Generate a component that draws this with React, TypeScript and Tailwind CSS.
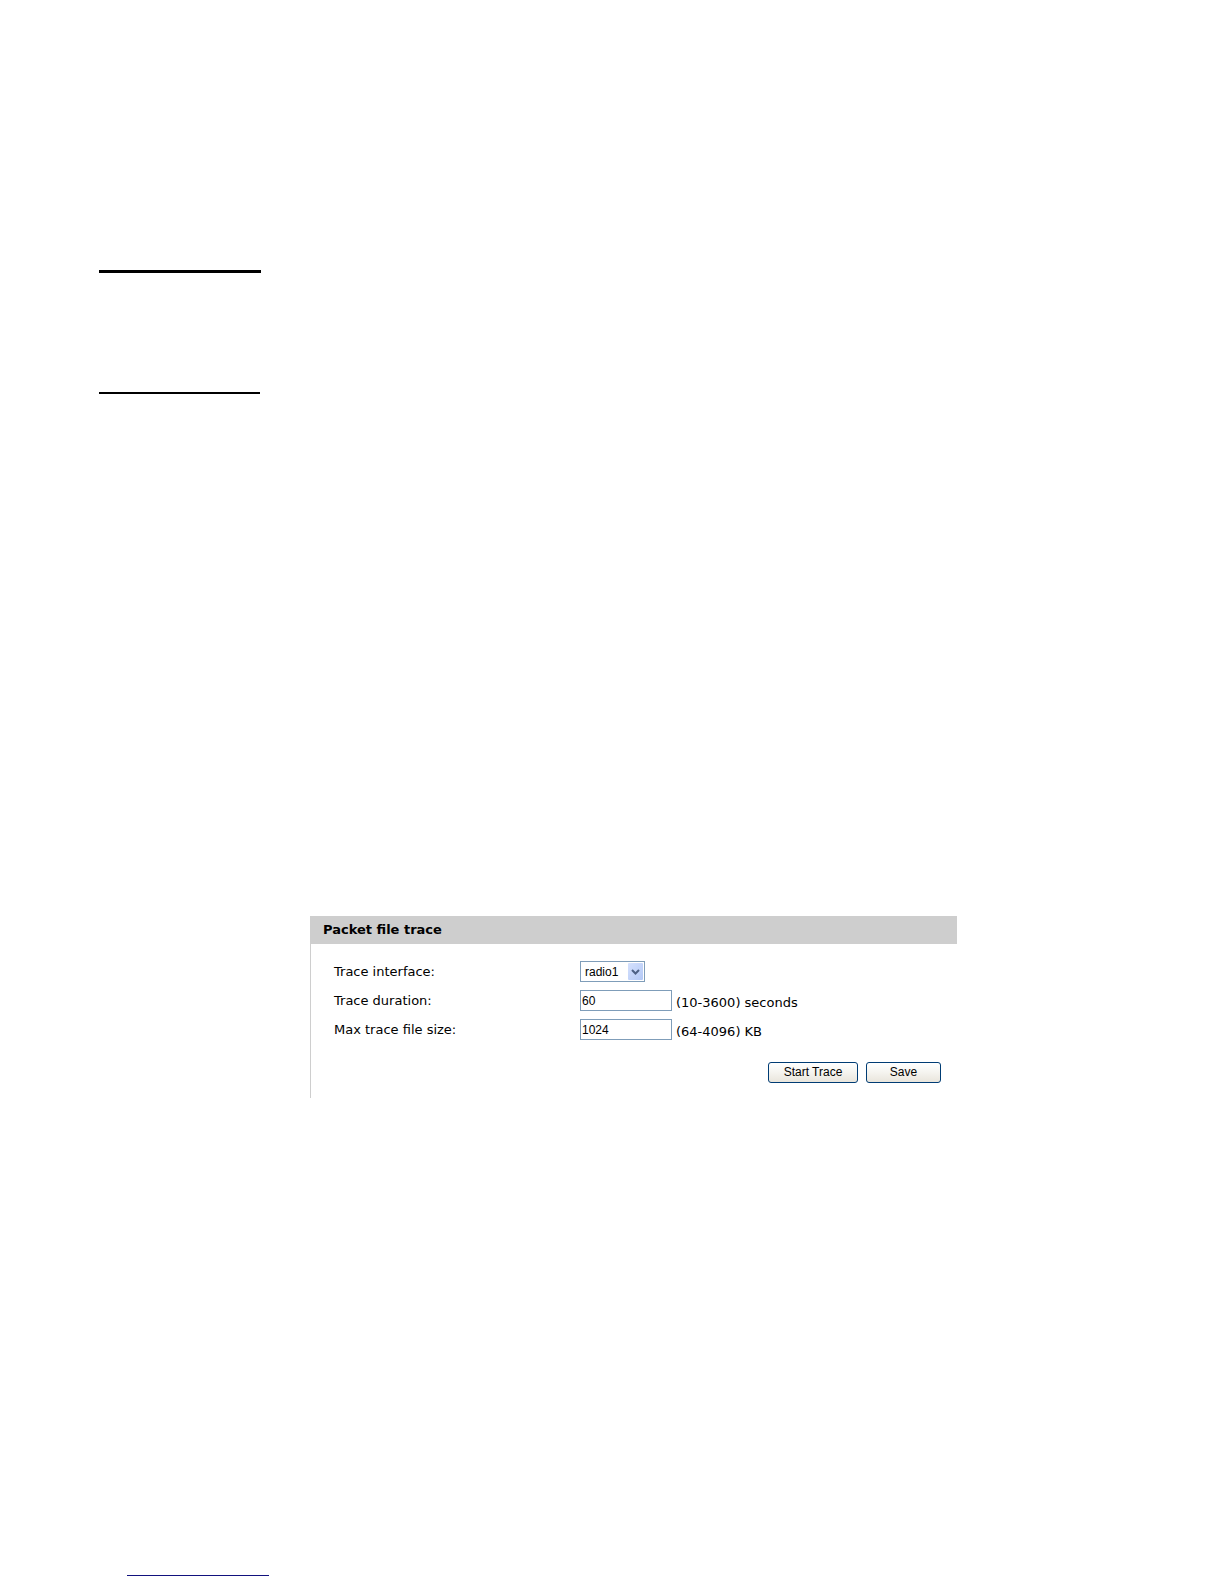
import { useState } from 'react';

const FIELDS = [
    { id: "duration", label: "Trace duration:", initial: "60", hint: "(10-3600) seconds" },
    { id: "size", label: "Max trace file size:", initial: "1024", hint: "(64-4096) KB" }
];

const BUTTON = "h-[21px] rounded-[3px] border border-[#003c74] bg-linear-to-b from-white via-[#f5f4ef] to-[#e9e5dc] pb-px font-['Liberation_Sans',sans-serif] text-[12px] leading-[18px] text-black";

function TraceInput({ id, label, initial, hint }: { id: string; label: string; initial: string; hint: string }) {
    const [value, setValue] = useState(initial);

    return (
        <div className="flex h-[21px] items-center">
            <label htmlFor={id} className="w-[246px] shrink-0">{label}</label>
            <input
                id={id}
                type="text"
                value={value}
                onChange={(e) => setValue(e.target.value)}
                className="h-[21px] w-[92px] border border-[#7f9db9] bg-white px-px font-['Liberation_Sans',sans-serif] text-[12px] focus:outline-none"
            />
            <span className="ml-1 pt-1">{hint}</span>
        </div>
    );
}

function InterfaceSelect() {
    return (
        <div className="flex h-[21px] items-center">
            <label htmlFor="interface" className="w-[246px] shrink-0">Trace interface:</label>
            <div className="relative">
                <select
                    id="interface"
                    defaultValue="radio1"
                    className="block h-[21px] w-[65px] appearance-none border border-[#7f9db9] bg-white pl-1 font-['Liberation_Sans',sans-serif] text-[12px] focus:outline-none"
                >
                    <option value="radio1">radio1</option>
                </select>
                <span className="pointer-events-none absolute top-[2px] right-[2px] flex h-[17px] w-[15px] items-center justify-center rounded-[1px] bg-linear-to-br from-[#d5e1fd] to-[#b3c8f6]">
                    <svg width="9" height="6" viewBox="0 0 9 6" fill="none" aria-hidden="true">
                        <path d="M1 1l3.5 3.5L8 1" stroke="#4d6185" strokeWidth="2" />
                    </svg>
                </span>
            </div>
        </div>
    );
}

export default function App() {
    return (
        <main className="flex min-h-screen flex-col bg-white pt-[270px] pl-[99px] pb-2 font-['DejaVu_Sans',Verdana,sans-serif] text-[13px] text-black">
            <hr className="w-[162px] border-0 border-t-3 border-black" />
            <hr className="mt-[119px] w-[161px] border-0 border-t-2 border-black" />

            <section className="mt-[522px] mr-[267px] ml-[211px]">
                <h2 className="bg-[#cecece] px-[13px] text-[13px] leading-7 font-bold">Packet file trace</h2>
                <form className="border-l border-[#cecece] pt-[17px] pr-4 pb-[15px] pl-[23px]" onSubmit={(e) => e.preventDefault()}>
                    <div className="flex flex-col gap-2">
                        <InterfaceSelect />
                        {FIELDS.map((field) => (
                            <TraceInput key={field.id} {...field} />
                        ))}
                    </div>
                    <div className="mt-[22px] flex justify-end gap-2">
                        <button type="submit" className={`${BUTTON} w-[90px]`}>Start Trace</button>
                        <button type="button" className={`${BUTTON} w-[75px]`}>Save</button>
                    </div>
                </form>
            </section>

            <hr className="mt-auto ml-7 h-px w-[142px] border-0 bg-[#12127e]" />
        </main>
    );
}
